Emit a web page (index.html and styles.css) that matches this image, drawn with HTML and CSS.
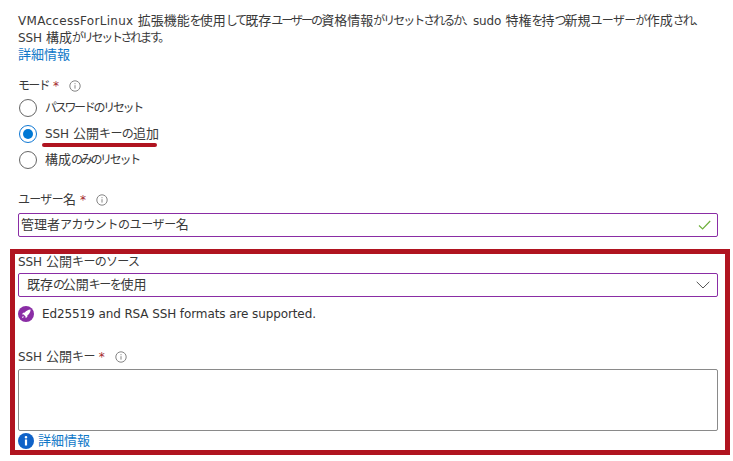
FILE: index.html
```html
<!DOCTYPE html>
<html lang="ja">
<head>
<meta charset="utf-8">
<title>SSH 公開キーの追加</title>
<link rel="stylesheet" href="styles.css">
</head>
<body>
<main class="page">
  <p class="intro"><span class="lat wide">VMAccessForLinux</span> 拡張機能<span class="k2">を</span>使用<span class="k2">して</span>既存<span class="k2">ユーザーの</span>資格情報<span class="k2">がリセットされるか、</span><span class="lat">sudo</span> 特権<span class="k2">を</span>持<span class="k2">つ</span>新規<span class="k1">ユーザーが</span>作成<span class="k2">され、</span><br><span class="lat">SSH</span> 構成<span class="k">がリセットされます。</span><br><a href="#">詳細情報</a></p>

  <div class="label mode-label"><span class="k3">モード</span><span class="req">*</span>
    <svg class="info" viewBox="0 0 12 12"><circle cx="6" cy="6" r="5.2"/><path d="M6 5.2v3.4M6 3.2v1"/></svg>
  </div>
  <div class="radios">
    <label class="radio"><span class="dot"></span><span class="k">パスワードのリセット</span></label>
    <label class="radio on"><span class="dot"></span><span class="underlined"><span class="lat">SSH</span> 公開<span class="k1">キーの</span>追加</span></label>
    <label class="radio"><span class="dot"></span><span>構成<span class="k">のみのリセット</span></span></label>
  </div>

  <div class="label user-label"><span><span class="k1">ユーザー</span>名</span><span class="req">*</span>
    <svg class="info" viewBox="0 0 12 12"><circle cx="6" cy="6" r="5.2"/><path d="M6 5.2v3.4M6 3.2v1"/></svg>
  </div>
  <div class="field user-field">
    <span>管理者<span class="k4">アカウントのユーザー</span>名</span>
    <svg class="check" viewBox="0 0 13 10"><path d="M1 5.5l3.6 3.4L12.2 1"/></svg>
  </div>

  <section class="box">
    <div class="label src-label"><span><span class="lat">SSH</span> 公開<span class="k1">キーのソース</span></span></div>
    <div class="field select-field">
      <span>既存<span class="k">の</span>公開<span class="k5">キーを</span>使用</span>
      <svg class="chev" viewBox="0 0 14 8"><path d="M.7.8L7 7l6.3-6.2"/></svg>
    </div>
    <div class="note">
      <svg class="rocket" viewBox="0 0 16 16"><circle cx="8" cy="8" r="8"/><path class="w" d="M12.6 3.4c-2.6.1-4.4 1.2-5.8 3.1L5.3 6.7 3.8 8.3l1.8.2 1.9 1.9.2 1.8 1.6-1.5.2-1.5c1.9-1.4 3-3.2 3.1-5.8zM4.9 10l-1.1 2.2L6 11.1z"/></svg>
      <span class="lat">Ed25519 and RSA SSH formats are supported.</span>
    </div>
    <div class="label key-label"><span><span class="lat">SSH</span> 公開<span class="k1">キー</span></span><span class="req">*</span>
      <svg class="info" viewBox="0 0 12 12"><circle cx="6" cy="6" r="5.2"/><path d="M6 5.2v3.4M6 3.2v1"/></svg>
    </div>
    <div class="textarea"></div>
    <div class="more">
      <svg class="info-fill" viewBox="0 0 16 16"><circle cx="8" cy="8" r="8"/><path class="w" d="M6.9 6.6h2.2v6H6.9zM8 2.9a1.3 1.3 0 1 1 0 2.6 1.3 1.3 0 0 1 0-2.6z"/></svg>
      <a href="#">詳細情報</a>
    </div>
  </section>
</main>
</body>
</html>
```

FILE: styles.css
```css
* { box-sizing: border-box; }
html, body { margin: 0; background: #fff; }
body {
  width: 733px;
  height: 461px;
  overflow: hidden;
  font-family: "DejaVu Sans", "Noto Sans CJK JP", sans-serif;
  font-size: 13px;
  line-height: 16px;
  color: #3a3a3a;
}
a { color: #0f78c8; text-decoration: none; }
.lat, .k, .k1, .k2, .k3, .k4, .k5 { font-size: 12px; line-height: 1; }
.lat { letter-spacing: -0.1px; }
.lat.wide { letter-spacing: 0.3px; }
.k { letter-spacing: -2.3px; }
.k1 { letter-spacing: -0.7px; }
.k2 { letter-spacing: -2px; }
.k3 { letter-spacing: -1.7px; }
.k4 { letter-spacing: -0.4px; }
.k5 { letter-spacing: -1.4px; }
.page { padding: 12px 3px 0 18px; }
.intro { margin: 0; line-height: 17px; width: 700px; height: 51px; white-space: nowrap; }
.label { height: 18px; display: flex; align-items: center; }
.req { color: #a4262c; margin-left: 4px; font-size: 12px; }
.info { width: 12px; height: 12px; margin-left: 10px; fill: none; stroke: #858585; stroke-width: 1; }
.mode-label { margin-top: 14px; }
.radios { display: flex; flex-direction: column; }
.radio { height: 26px; display: flex; align-items: center; gap: 8px; padding-left: 1px; }
.dot {
  width: 18px; height: 18px; border-radius: 50%;
  border: 1.5px solid #666; background: #fff; flex: none; position: relative;
}
.radio.on .dot { border-color: #0f78d4; }
.radio.on .dot::after {
  content: ""; position: absolute; inset: 3px; border-radius: 50%; background: #0078d4;
}
.underlined { position: relative; }
.underlined::after {
  content: ""; position: absolute; left: -3px; right: 2px; bottom: -5px;
  height: 4px; border-radius: 2px; background: #b01420;
}
.user-label { margin-top: 18px; }
.field {
  width: 700px; height: 24px; border: 1px solid #8a2da5; border-radius: 2px;
  display: flex; align-items: center; justify-content: space-between; padding: 0 8px 0 2px;
  margin-top: 4px;
}
.check { width: 13px; height: 10px; fill: none; stroke: #6fb03c; stroke-width: 1.2; margin-right: -2px; }
.box {
  margin: 12px 0 0 -8px;
  width: 720px; height: 206px;
  border: 5px solid #b01420;
  padding: 0 0 0 3px;
}
.src-label { height: 15px; }
.select-field { margin-top: 4px; padding-left: 8px; padding-right: 7px; }
.chev { width: 14px; height: 8px; fill: none; stroke: #555; stroke-width: 1; }
.note { display: flex; align-items: center; gap: 8px; margin-top: 8px; height: 18px; color: #333; }
.rocket, .info-fill { width: 16px; height: 16px; flex: none; }
.rocket { fill: #8a2da5; }
.info-fill { fill: #0f62c8; }
.w { fill: #fff; }
.key-label { margin-top: 25px; }
.textarea { width: 700px; height: 62px; border: 1px solid #8a8a8a; border-radius: 2px; margin-top: 3px; }
.more { display: flex; align-items: center; gap: 4px; margin-top: 2px; height: 16px; }
```
